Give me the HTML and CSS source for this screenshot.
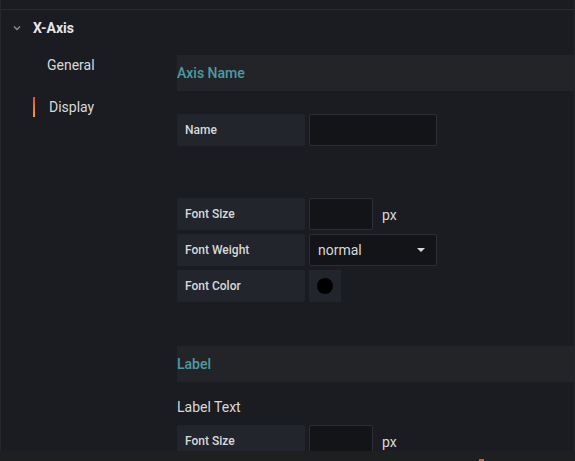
FILE: index.html
```html
<!DOCTYPE html>
<html>
<head>
<meta charset="utf-8">
<link rel="stylesheet" href="styles.css">
</head>
<body>
<div class="top"></div>
<div class="layout">
  <aside class="side">
    <div class="group-title">
      <svg class="chev" width="8" height="6" viewBox="0 0 8 6"><path d="M1 1.5 L4 4.5 L7 1.5" fill="none" stroke="#8e8e8e" stroke-width="1.4"/></svg>
      <span>X-Axis</span>
    </div>
    <div class="nav-item">General</div>
    <div class="nav-item active">Display</div>
  </aside>
  <main class="main">
    <div class="section-head">Axis Name</div>
    <div class="row">
      <div class="lbl">Name</div>
      <div class="input wide"></div>
    </div>
    <div class="row spaced">
      <div class="lbl">Font Size</div>
      <div class="input small"></div>
      <span class="unit">px</span>
    </div>
    <div class="row">
      <div class="lbl">Font Weight</div>
      <div class="input wide select"><span>normal</span><svg width="8" height="4" viewBox="0 0 8 4"><path d="M0 0 L8 0 L4 4 Z" fill="#d8d9da"/></svg></div>
    </div>
    <div class="row">
      <div class="lbl">Font Color</div>
      <div class="swatch"><span class="dot"></span></div>
    </div>
    <div class="section-head second">Label</div>
    <div class="plain">Label Text</div>
    <div class="row">
      <div class="lbl">Font Size</div>
      <div class="input small"></div>
      <span class="unit">px</span>
    </div>
  </main>
</div>
<div class="bottom-strip"><span class="mark"></span></div>
</body>
</html>
```
FILE: styles.css
```css
html, body {
  margin: 0;
  padding: 0;
  background: #1a1c21;
  font-family: Roboto, "Liberation Sans", sans-serif;
  color: #d8d9da;
  overflow: hidden;
  height: 461px;
}
body {
  border-left: 1px solid #26282d;
  border-right: 1px solid #24262b;
  box-sizing: border-box;
}
.top {
  height: 9px;
  border-bottom: 1px solid #2a2c31;
}
.layout {
  display: flex;
}
.side {
  width: 176px;
  flex: none;
}
.group-title {
  display: flex;
  align-items: center;
  height: 36px;
  font-size: 14px;
  font-weight: 700;
  color: #e4e6ea;
}
.chev {
  margin-left: 12px;
  margin-right: 12px;
}
.nav-item {
  position: relative;
  font-size: 14px;
  line-height: 20px;
  padding-left: 46px;
  color: #d8d9da;
}
.group-title + .nav-item {
  margin-top: 9px;
}
.nav-item.active {
  margin-top: 22px;
  padding-left: 48px;
}
.nav-item.active::before {
  content: "";
  position: absolute;
  left: 32px;
  top: 0;
  width: 2px;
  height: 20px;
  background: linear-gradient(#eb4a2a, #f3a428);
}
.main {
  flex: 1;
  padding-top: 45px;
}
.section-head {
  height: 36px;
  display: flex;
  align-items: center;
  background: #232428;
  color: #4e9ba4;
  font-size: 14px;
  font-weight: 500;
  margin-bottom: 23px;
}
.section-head.second {
  margin-top: 44px;
  margin-bottom: 0;
}
.row {
  display: flex;
  align-items: center;
  gap: 4px;
  height: 32px;
  margin-bottom: 4px;
}
.row.spaced {
  margin-top: 52px;
}
.lbl {
  width: 112px;
  height: 32px;
  padding-left: 8px;
  padding-right: 8px;
  display: flex;
  align-items: center;
  background: #22252b;
  border-radius: 2px;
  font-size: 12px;
  font-weight: 500;
  color: #d8d9da;
}
.input {
  height: 32px;
  box-sizing: border-box;
  background: #131418;
  border: 1px solid #2c2e33;
  border-radius: 2px;
}
.input.wide { width: 128px; }
.input.small { width: 64px; }
.select {
  display: flex;
  align-items: center;
  justify-content: space-between;
  padding: 0 11px 0 8px;
  font-size: 14px;
  color: #d8d9da;
}
.unit {
  margin-left: 5px;
  font-size: 14px;
  color: #d8d9da;
  padding-top: 2px;
}
.swatch {
  width: 32px;
  height: 32px;
  background: #22252b;
  display: flex;
  align-items: center;
  justify-content: center;
}
.dot {
  width: 16px;
  height: 16px;
  border-radius: 50%;
  background: #000;
}
.plain {
  height: 20px;
  line-height: 20px;
  margin-top: 15px;
  margin-bottom: 8px;
  font-size: 14px;
  color: #d8d9da;
}
.bottom-strip {
  position: absolute;
  left: 0;
  right: 0;
  top: 451px;
  height: 10px;
  background: #1e1f20;
}
.mark {
  position: absolute;
  left: 479px;
  bottom: 0;
  width: 5px;
  height: 2px;
  background: #e0571f;
}
```
